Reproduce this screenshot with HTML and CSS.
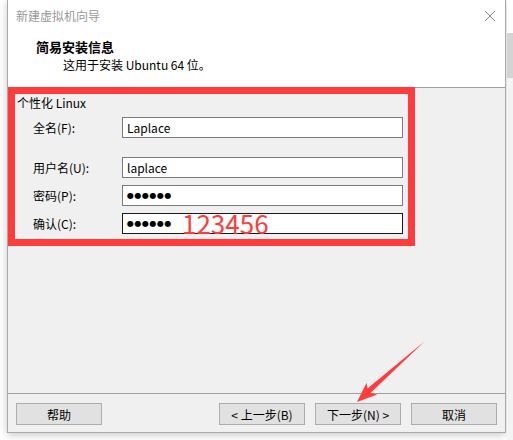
FILE: index.html
```html
<!DOCTYPE html>
<html lang="zh-CN">
  <head>
    <meta charset="UTF-8" />
    <title>新建虚拟机向导</title>
    <link rel="stylesheet" href="styles.css">
  </head>

  <body>
    <div class="desktop">
      <div class="dialog">
        <div class="titlebar">
          <span class="title">新建虚拟机向导</span>
          <svg class="close" width="12" height="12" viewBox="0 0 12 12">
            <path d="M1 1 L11 11 M11 1 L1 11" stroke="#8a8a8a" stroke-width="1" fill="none" />
          </svg>
        </div>
        <div class="header">
          <div class="head-title">简易安装信息</div>
          <div class="head-sub">这用于安装 Ubuntu 64 位。</div>
        </div>
        <div class="content">
          <div class="group">
            <div class="legend">个性化 Linux</div>
            <div class="fields">
              <div class="row row-name">
                <label>全名(F):</label>
                <div class="input">Laplace</div>
              </div>
              <div class="row">
                <label>用户名(U):</label>
                <div class="input">laplace</div>
              </div>
              <div class="row">
                <label>密码(P):</label>
                <div class="input dots">●●●●●●</div>
              </div>
              <div class="row">
                <label>确认(C):</label>
                <div class="input dots focused">●●●●●●</div>
                <span class="note">123456</span>
              </div>
            </div>
          </div>
        </div>
        <div class="footer">
          <div class="btn">帮助</div>
          <div class="spacer"></div>
          <div class="btn">&lt; 上一步(B)</div>
          <div class="btn">下一步(N) &gt;</div>
          <div class="btn btn-cancel">取消</div>
        </div>
      </div>
      <div class="behind"></div>
    </div>

    <!-- annotation arrow -->
    <svg class="arrow" width="513" height="440" viewBox="0 0 513 440">
      <polygon points="357,402 366.6,382.7 367.5,388.5 425,341 370.5,393 377.3,394.5" fill="#ff3b3b" />
    </svg>
  </body>
</html>
```

FILE: styles.css
```css
body {
  margin: 0;
  width: 513px;
  height: 440px;
  overflow: hidden;
  background: #fff;
  font-family: "Noto Sans CJK SC", sans-serif;
  font-size: 12px;
  color: #000;
}

.desktop {
  display: flex;
  height: 440px;
}

.dialog {
  margin-left: 7px;
  width: 497px;
  height: 432px;
  border: 1px solid #a9a9a9;
  border-top: none;
  box-shadow: 0 2px 8px rgba(0, 0, 0, 0.22);
  display: flex;
  flex-direction: column;
  background: #f0f0f0;
}

.behind {
  flex: 1;
  margin-left: 1px;
  background: linear-gradient(#fff 0, #fff 33px, #d4d4d4 33px, #d4d4d4 78px, #f4f4f4 78px);
}

.titlebar {
  height: 30px;
  background: #fff;
  display: flex;
  align-items: center;
  padding-left: 8px;
  padding-right: 9px;
}

.title {
  color: #999;
  flex: 1;
}

.close {
  margin-top: 1px;
}

.header {
  height: 57px;
  background: #fff;
  padding-left: 28px;
  box-sizing: border-box;
  padding-top: 8px;
}

.head-title {
  font-weight: bold;
  font-size: 13px;
  line-height: 18px;
}

.head-sub {
  padding-left: 27px;
  line-height: 18px;
}

.content {
  flex: 1;
  border-top: 1px solid #a0a0a0;
}

.group {
  margin-top: -1px;
  width: 393px;
  border: 7px solid #ff3b3b;
  padding-bottom: 5px;
}

.legend {
  padding-left: 2px;
  padding-top: 1px;
  line-height: 16px;
}

.fields {
  margin-top: 6px;
  padding-left: 18px;
  display: flex;
  flex-direction: column;
  gap: 7px;
}

.row {
  display: flex;
  align-items: center;
  height: 21px;
  position: relative;
}

.row-name {
  margin-bottom: 12px;
}

.row label {
  width: 89px;
}

.input {
  width: 279px;
  height: 19px;
  border: 1px solid #7a7a7a;
  background: #fff;
  padding-left: 4px;
  box-sizing: content-box;
  line-height: 19px;
  width: 275px;
}

.dots {
  font-size: 8px;
  letter-spacing: 0.5px;
  font-family: "DejaVu Sans", sans-serif;
}

.focused {
  border-color: #1a1a1a;
}

.note {
  position: absolute;
  left: 149px;
  top: -4px;
  color: #ff3b3b;
  font-size: 26px;
  line-height: 28px;
}

.footer {
  height: 39px;
  border-top: 1px solid #a0a0a0;
  display: flex;
  align-items: flex-start;
  padding: 9px 8px 0 8px;
  box-sizing: border-box;
  gap: 10px;
}

.spacer {
  flex: 1;
}

.btn {
  width: 84px;
  height: 20px;
  border: 1px solid #adadad;
  background: #e1e1e1;
  display: flex;
  align-items: center;
  justify-content: center;
}

.arrow {
  position: absolute;
  left: 0;
  top: 0;
  pointer-events: none;
}
```
